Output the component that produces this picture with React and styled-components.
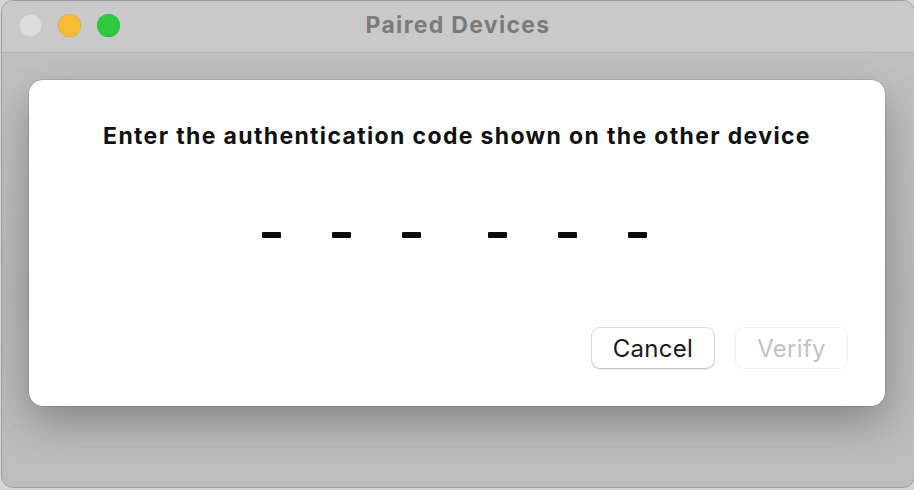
import styled, { createGlobalStyle } from 'styled-components';

const GlobalStyle = createGlobalStyle`
  html, body {
    margin: 0;
    padding: 0;
    background: #d6d6d6;
    font-family: Inter, "Liberation Sans", sans-serif;
  }
`;

const Window = styled.div`
  width: 912px;
  height: 486px;
  margin-left: 1px;
  border: 1px solid #9e9e9e;
  border-radius: 12px;
  overflow: hidden;
  background: linear-gradient(180deg, #c3c3c3 0%, #b8b8b8 60%, #bdbdbd 100%);
  display: flex;
  flex-direction: column;
`;

const TitleBar = styled.div`
  position: relative;
  height: 51px;
  flex-shrink: 0;
  background: #c9c9c9;
  border-bottom: 1px solid #b6b6b6;
  display: flex;
  align-items: center;
  padding-left: 17px;
`;

const Lights = styled.div`
  display: flex;
  gap: 16px;
  margin-top: -2px;
`;

const Light = styled.span`
  width: 23px;
  height: 23px;
  border-radius: 50%;
  background: ${(p) => p.color};
  box-shadow: inset 0 0 0 0.5px rgba(0, 0, 0, 0.12);
`;

const Title = styled.div`
  position: absolute;
  left: 0;
  right: 0;
  top: 10px;
  text-align: center;
  font-size: 23px;
  letter-spacing: 1.3px;
  font-weight: 700;
  color: #7b7b7b;
  pointer-events: none;
`;

const Content = styled.div`
  flex: 1;
  padding: 27px 27px 0 27px;
`;

const Sheet = styled.div`
  width: 856px;
  height: 326px;
  box-sizing: border-box;
  background: #fff;
  border-radius: 14px;
  box-shadow: 0 0 0 0.5px rgba(0, 0, 0, 0.2), 0 16px 40px rgba(0, 0, 0, 0.28);
  display: flex;
  flex-direction: column;
  align-items: center;
  padding: 42px 38px 38px;
`;

const Heading = styled.h1`
  margin: 0;
  font-size: 23px;
  letter-spacing: 1.35px;
  line-height: 28px;
  font-weight: 700;
  color: #111;
`;

const Code = styled.div`
  display: flex;
  align-items: center;
  margin-top: 82px;
  margin-left: -5px;
  gap: 67px;
`;

const Group = styled.div`
  display: flex;
  gap: 51px;
`;

const Dash = styled.span`
  width: 19px;
  height: 6px;
  background: #0c0c0c;
  border-radius: 1px;
`;

const Actions = styled.div`
  margin-top: auto;
  align-self: flex-end;
  display: flex;
  gap: 22px;
`;

const Button = styled.button`
  height: 40px;
  width: ${(p) => p.w}px;
  border: none;
  border-radius: 8px;
  background: #fff;
  font-family: Inter, "Liberation Sans", sans-serif;
  font-size: 24px;
  letter-spacing: 0.3px;
  color: ${(p) => (p.disabled ? '#c2c2c2' : '#1a1a1a')};
  box-shadow: ${(p) =>
    p.disabled
      ? '0 0 0 1px rgba(0, 0, 0, 0.06)'
      : '0 0 0 1px rgba(0, 0, 0, 0.12), 0 1px 2px rgba(0, 0, 0, 0.18)'};
  padding: 0;
`;

function DashGroup() {
  return (
    <Group>
      <Dash />
      <Dash />
      <Dash />
    </Group>
  );
}

export default function App() {
  return (
    <>
      <GlobalStyle />
      <Window>
        <TitleBar>
          <Lights>
            <Light color="#dcdcdc" />
            <Light color="#f8bb36" />
            <Light color="#2cc83e" />
          </Lights>
          <Title>Paired Devices</Title>
        </TitleBar>
        <Content>
          <Sheet>
            <Heading>Enter the authentication code shown on the other device</Heading>
            <Code>
              <DashGroup />
              <DashGroup />
            </Code>
            <Actions>
              <Button w={122}>Cancel</Button>
              <Button w={111} disabled>Verify</Button>
            </Actions>
          </Sheet>
        </Content>
      </Window>
    </>
  );
}
